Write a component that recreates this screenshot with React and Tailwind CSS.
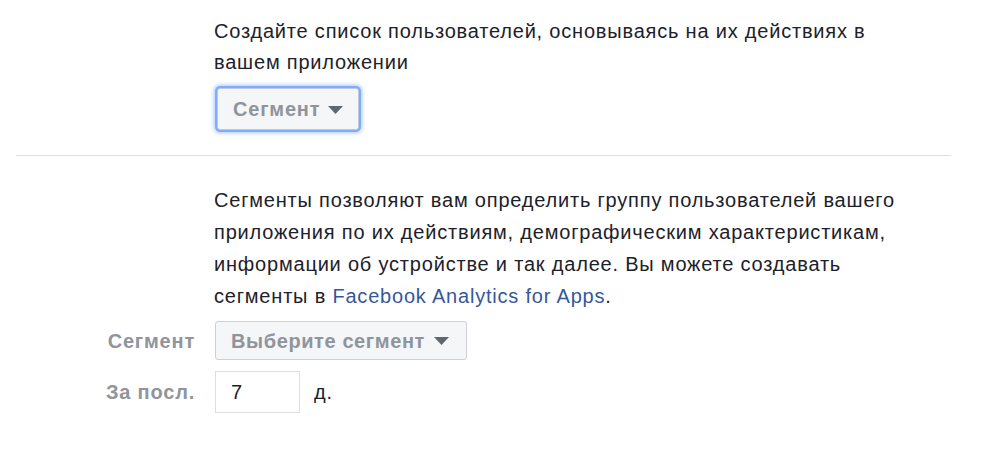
export default function App() {
  return (
    <div className="w-[1008px] h-[466px] bg-white text-[#1d2129] text-[20px] tracking-[0.8px] leading-[32px]" style={{ fontFamily: '"Liberation Sans", Arial, sans-serif' }}>
      {/* Top section */}
      <div className="pt-[16px] pl-[214px]">
        <p className="w-[720px] leading-[31px]">
          Создайте список пользователей, основываясь на их действиях в вашем приложении
        </p>
        <button className="mt-[10px] ml-[3px] h-[42px] px-[15px] flex items-center gap-[8px] whitespace-nowrap rounded-[3px] border border-[#bfc9d9] bg-[#f5f6f7] text-[#90949c] font-bold tracking-[0.8px] shadow-[0_0_0_2px_#80abff,0_0_4px_3px_#a9c6ff]">
          Сегмент
          <Caret />
        </button>
      </div>

      {/* Divider */}
      <div className="mt-[25px] ml-[16px] w-[935px] h-px bg-[#dddfe2]" />

      {/* Bottom section */}
      <div className="pt-[28px]">
        <p className="ml-[214px] w-[720px]">
          Сегменты позволяют вам определить группу пользователей вашего приложения по их действиям, демографическим характеристикам, информации об устройстве и так далее. Вы можете создавать сегменты в{' '}
          <a className="text-[#365899]">Facebook Analytics for Apps</a>.
        </p>

        <div className="mt-[9px] grid grid-cols-[195px_1fr] gap-x-[20px] gap-y-[11px] items-center">
          <div className="text-right font-bold text-[#90949c]">Сегмент</div>
          <div>
            <button className="h-[39px] w-[252px] px-[15px] flex items-center gap-[9px] whitespace-nowrap rounded-[3px] border border-[#ced0d4] bg-[#f5f6f7] text-[#90949c] font-bold tracking-[0.6px]">
              Выберите сегмент
              <Caret />
            </button>
          </div>

          <div className="text-right font-bold text-[#90949c]">За посл.</div>
          <div className="flex items-center">
            <div className="h-[42px] w-[85px] border border-[#dddfe2] flex items-center pl-[15px] text-[#1d2129]">7</div>
            <span className="ml-[14px] text-[#1d2129]">д.</span>
          </div>
        </div>
      </div>
    </div>
  );
}

function Caret() {
  return (
    <svg width="15" height="8" viewBox="0 0 15 8" className="mt-[1px] shrink-0">
      <path d="M0 0h15L7.5 8z" fill="#606770" />
    </svg>
  );
}
